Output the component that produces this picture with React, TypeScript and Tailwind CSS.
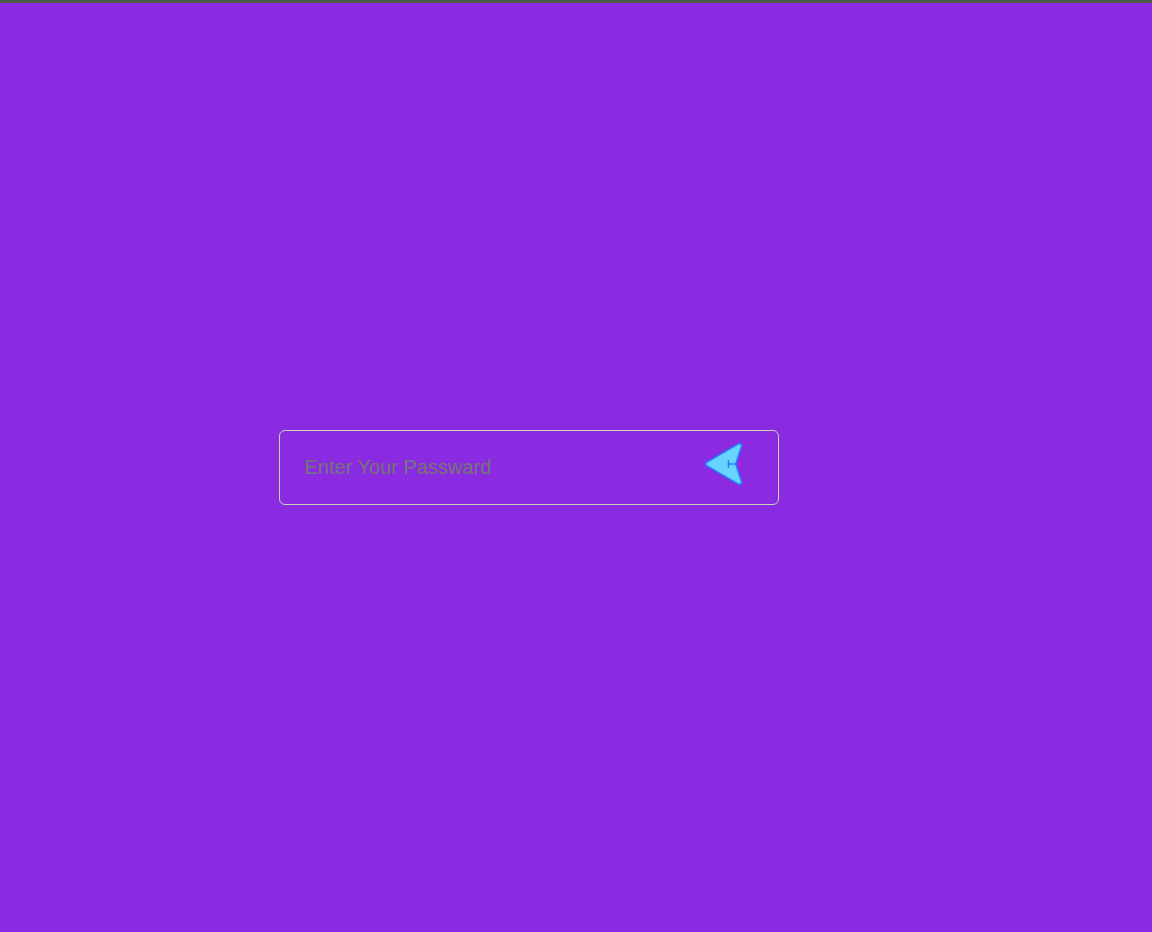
export default function App() {
  return (
    <main className="h-[932px] w-full overflow-hidden border-t-[3px] border-[#4c5b46] bg-[#8a2be2] pt-[427px] pl-[279px] font-['Liberation_Sans',Arial,sans-serif]">
      <form
        className="flex h-[75px] w-[500px] rounded-[6px] border border-[#c9d3bb]"
        onSubmit={(event) => event.preventDefault()}
      >
        <input
          type="password"
          aria-label="Password"
          placeholder="Enter Your Passward"
          className="h-[73px] min-w-0 flex-1 bg-transparent pl-[24.5px] text-[20px] text-white outline-none placeholder:text-[#757575]"
        />
        <button type="submit" aria-label="Submit" className="mt-[9px] mr-[30px] h-12 w-12">
          <svg viewBox="0 0 48 48" className="h-12 w-12" fill="none" strokeLinejoin="round">
            <path
              d="M6.7 22.4L38 4.1C40 2.9 42 4.3 41.3 6.7L35.7 24L41.3 41.3C42 43.7 40 45.1 38 43.9L6.7 25.6C5.4 24.8 5.4 23.2 6.7 22.4Z"
              fill="#66d4ff"
              stroke="#2481fa"
              strokeWidth="1.5"
            />
            <path d="M28.5 20V28M28.5 24H35.6" stroke="#2481fa" strokeWidth="1.5" />
          </svg>
        </button>
      </form>
    </main>
  );
}
